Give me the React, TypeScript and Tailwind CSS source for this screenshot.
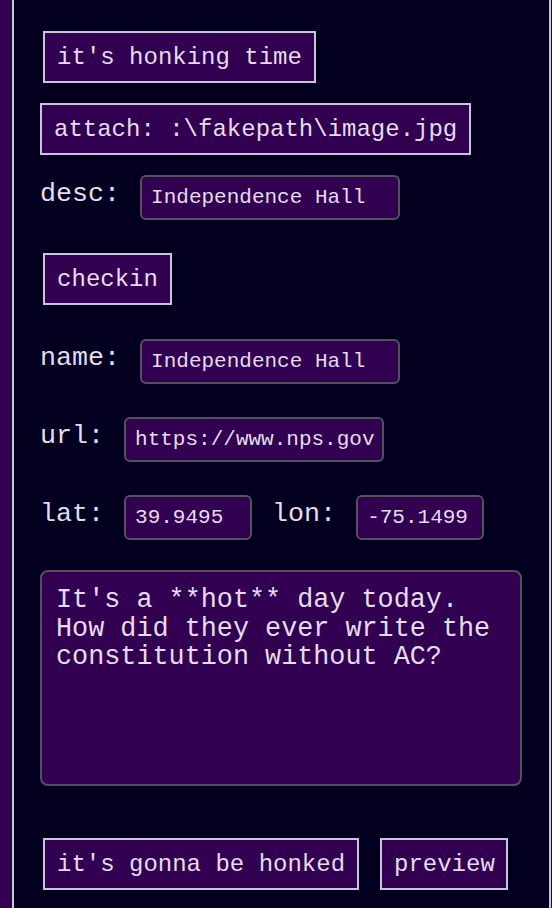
function Btn({ children, className = '' }: { children: React.ReactNode; className?: string }) {
  return (
    <button
      className={`h-[52px] whitespace-nowrap border-2 border-[#c9c6dc] bg-[#320050] px-[12px] pt-[2px] text-[24px] leading-none text-[#e4dcef] ${className}`}
    >
      {children}
    </button>
  )
}

function Field({ value, w }: { value: string; w: string }) {
  return (
    <div
      className={`${w} flex h-[45px] items-center whitespace-nowrap rounded-[6px] border-2 border-[#55505e] bg-[#320050] px-[9px] text-[21px] text-[#e4dcef]`}
    >
      {value}
    </div>
  )
}

function Row({ label, children }: { label: string; children: React.ReactNode }) {
  return (
    <div className="flex items-center gap-[20px]">
      <span className="-mt-[6px] text-[26.7px] leading-none text-[#e4dcef]">{label}</span>
      {children}
    </div>
  )
}

export default function App() {
  return (
    <div className="flex h-[908px] w-[552px] overflow-hidden bg-[#32004f] pl-[12px] pr-[1px] font-[family-name:Liberation_Mono,Courier_New,monospace]">
      <div className="flex flex-1 flex-col border-x-2 border-[#c9c6dc] bg-[#03001f] pl-[26px] pt-[31px]">
        <Btn className="ml-[3px] w-[273px]">it's honking time</Btn>
        <Btn className="mt-[20px] w-[431px]">attach: :\fakepath\image.jpg</Btn>
        <div className="mt-[20px]">
          <Row label="desc:">
            <Field value="Independence Hall" w="w-[260px]" />
          </Row>
        </div>
        <Btn className="ml-[3px] mt-[33px] w-[129px]">checkin</Btn>
        <div className="mt-[34px]">
          <Row label="name:">
            <Field value="Independence Hall" w="w-[260px]" />
          </Row>
        </div>
        <div className="mt-[33px]">
          <Row label="url:">
            <Field value="https://www.nps.gov" w="w-[260px]" />
          </Row>
        </div>
        <div className="mt-[33px]">
          <Row label="lat:">
            <Field value="39.9495" w="w-[128px]" />
            <span className="-mt-[6px] text-[26.7px] leading-none text-[#e4dcef]">lon:</span>
            <Field value="-75.1499" w="w-[128px]" />
          </Row>
        </div>
        <div className="mt-[30px] h-[216px] w-[482px] whitespace-pre-wrap rounded-[8px] border-2 border-[#55505e] bg-[#320050] px-[14px] pt-[14px] text-[26.8px] leading-[28.5px] text-[#e4dcef]">
          {"It's a **hot** day today.\nHow did they ever write the\nconstitution without AC?"}
        </div>
        <div className="mt-[52px] flex gap-[21px]">
          <Btn className="ml-[3px] w-[316px]">it's gonna be honked</Btn>
          <Btn className="w-[128px]">preview</Btn>
        </div>
      </div>
    </div>
  )
}
